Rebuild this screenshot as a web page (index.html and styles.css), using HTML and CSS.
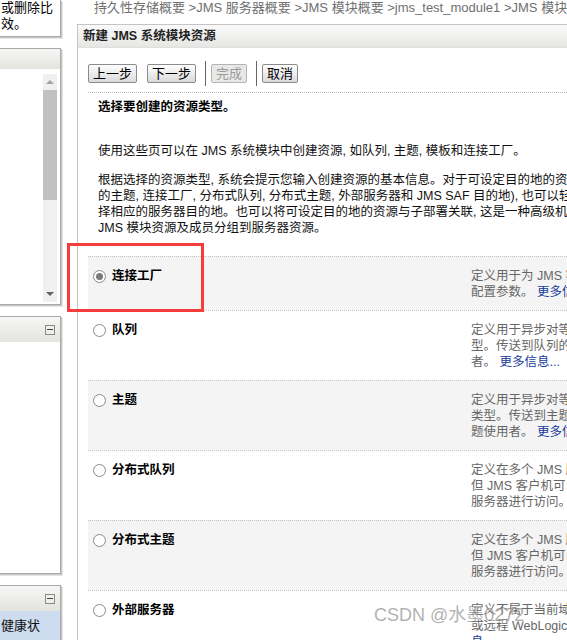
FILE: index.html
```html
<!DOCTYPE html>
<html lang="zh-CN">
<head>
    <meta charset="UTF-8">
    <meta name="viewport" content="width=device-width, initial-scale=1.0">
    <title>新建 JMS 系统模块资源</title>
    <link rel="stylesheet" href="styles.css">
</head>
<body>
    <div class="sidebar">
        <div class="side-panel panel-tip">
            <div class="tip-text">或删除比<br>效。</div>
        </div>

        <div class="side-panel panel-tree">
            <div class="side-head"></div>
            <div class="side-body">
                <div class="scrollbar">
                    <div class="arrow-up"></div>
                    <div class="thumb"></div>
                    <div class="track"></div>
                    <div class="arrow-down"></div>
                </div>
            </div>
        </div>

        <div class="side-panel panel-tasks">
            <div class="side-head"><span class="collapse"></span></div>
            <div class="side-body"></div>
        </div>

        <div class="side-panel panel-health">
            <div class="side-head"><span class="collapse"></span></div>
            <div class="health-row">健康状</div>
        </div>
    </div>

    <div class="content">
        <div class="breadcrumb">持久性存储概要 &gt;JMS 服务器概要 &gt;JMS 模块概要 &gt;jms_test_module1 &gt;JMS 模块概要</div>

        <div class="panel">
            <div class="panel-head">新建 JMS 系统模块资源</div>

            <div class="panel-body">
                <div class="toolbar">
                    <button class="btn">上一步</button>
                    <button class="btn">下一步</button>
                    <span class="sep"></span>
                    <button class="btn" disabled>完成</button>
                    <span class="sep"></span>
                    <button class="btn">取消</button>
                </div>

                <div class="intro">
                    <div class="intro-title">选择要创建的资源类型。</div>
                    <p class="intro-text">使用这些页可以在 JMS 系统模块中创建资源, 如队列, 主题, 模板和连接工厂。</p>
                    <p class="intro-text">根据选择的资源类型, 系统会提示您输入创建资源的基本信息。对于可设定目的地的资源 (如队列和主题<br>的主题, 连接工厂, 分布式队列, 分布式主题, 外部服务器和 JMS SAF 目的地), 也可以轻松地选<br>择相应的服务器目的地。也可以将可设定目的地的资源与子部署关联, 这是一种高级机制, 可以将<br>JMS 模块资源及成员分组到服务器资源。</p>
                </div>

                <div class="types">
                    <div class="type-row">
                        <label class="type-name"><span class="radio checked"></span>连接工厂</label>
                        <div class="type-desc">定义用于为 JMS 客户端创建连接的连接工厂的<br>配置参数。 <a href="#">更多信息...</a></div>
                    </div>
                    <div class="type-row">
                        <label class="type-name"><span class="radio"></span>队列</label>
                        <div class="type-desc">定义用于异步对等通信的 JMS 队列目的地类<br>型。传送到队列的消息只传递给一个队列使用<br>者。 <a href="#">更多信息...</a></div>
                    </div>
                    <div class="type-row">
                        <label class="type-name"><span class="radio"></span>主题</label>
                        <div class="type-desc">定义用于异步对等通信的 JMS 主题目的地的<br>类型。传送到主题的消息会传递给所有主<br>题使用者。 <a href="#">更多信息...</a></div>
                    </div>
                    <div class="type-row">
                        <label class="type-name"><span class="radio"></span>分布式队列</label>
                        <div class="type-desc">定义在多个 JMS 服务器上分布的一组队列,<br>但 JMS 客户机可以将其作为一个队列从单个<br>服务器进行访问。</div>
                    </div>
                    <div class="type-row">
                        <label class="type-name"><span class="radio"></span>分布式主题</label>
                        <div class="type-desc">定义在多个 JMS 服务器上分布的一组主题,<br>但 JMS 客户机可以将其作为一个主题从单个<br>服务器进行访问。</div>
                    </div>
                    <div class="type-row">
                        <label class="type-name"><span class="radio"></span>外部服务器</label>
                        <div class="type-desc">定义不属于当前域的外部 JMS 提供者<br>或远程 WebLogic 域中的目的地。<br><a href="#">息...</a></div>
                    </div>
                </div>
            </div>
        </div>
    </div>

    <div class="highlight"></div>
    <div class="watermark">CSDN @水墨0272</div>
</body>
</html>
```

FILE: styles.css
```css
* {
    margin: 0;
    padding: 0;
    box-sizing: border-box;
}

body {
    font-family: 'Liberation Sans', 'Noto Sans CJK SC', sans-serif;
    font-size: 12.5px;
    color: #000;
    background: #fff;
    display: flex;
    height: 640px;
    overflow: hidden;
    position: relative;
}

/* left column panels */
.sidebar {
    width: 62px;
    flex-shrink: 0;
}

.side-panel {
    margin-left: -10px;
    width: 71px;
    background: #fff;
    border: 1px solid #a9a9a9;
    box-shadow: 1px 1px 0 #c8c8c8, 2px 2px 0 #e4e4e4;
}

.panel-tip {
    border-top: none;
    height: 37px;
}

.tip-text {
    padding-left: 10px;
    line-height: 16px;
    font-size: 13px;
}

.panel-tree {
    margin-top: 11px;
    height: 257px;
}

.side-head {
    height: 20px;
    background: linear-gradient(#f6f6f4, #e3e3e0);
    display: flex;
    justify-content: flex-end;
    align-items: center;
    padding-right: 5px;
}

.panel-tasks .side-head,
.panel-health .side-head {
    height: 25px;
}

.collapse {
    width: 10px;
    height: 10px;
    border: 1px solid #8a8a85;
    background: #efefec;
    display: flex;
    align-items: center;
    justify-content: center;
}

.collapse::after {
    content: '';
    width: 6px;
    height: 1px;
    background: #444;
}

.panel-tree .side-body {
    display: flex;
    justify-content: flex-end;
    padding: 5px 3px 2px 0;
    height: 235px;
}

.scrollbar {
    width: 14px;
    background: #f0f0f0;
    display: flex;
    flex-direction: column;
    align-items: center;
}

.arrow-up,
.arrow-down {
    width: 0;
    height: 0;
    border-left: 4px solid transparent;
    border-right: 4px solid transparent;
    margin: 6px 0;
}

.arrow-up {
    border-bottom: 4px solid #a3a3a3;
}

.arrow-down {
    border-top: 4px solid #606060;
}

.thumb {
    width: 14px;
    height: 110px;
    background: #c1c1c1;
}

.track {
    flex: 1;
}

.panel-tasks {
    margin-top: 11px;
    height: 258px;
}

.panel-health {
    margin-top: 11px;
    height: 80px;
}

.health-row {
    background: #cddcee;
    height: 40px;
    padding: 7px 0 0 10px;
    line-height: 16px;
    font-size: 13px;
    color: #111;
}

/* main area */
.content {
    margin-left: 15px;
    width: 640px;
    flex-shrink: 0;
}

.breadcrumb {
    height: 24px;
    line-height: 16px;
    padding-left: 17px;
    font-size: 13px;
    color: #707070;
    white-space: nowrap;
}

.panel {
    border-left: 1px solid #c4c4c4;
    border-top: 1px solid #c4c4c4;
    height: 620px;
}

.panel-head {
    height: 23px;
    line-height: 22px;
    padding-left: 5px;
    font-weight: bold;
    color: #222;
    background: linear-gradient(#fafafa, #e6e6e4);
    border-bottom: 1px solid #e0e0e0;
}

.panel-body {
    padding: 13px 0 0 10px;
}

.toolbar {
    display: flex;
    align-items: center;
    height: 25px;
}

.btn {
    font: inherit;
    font-size: 13px;
    height: 19px;
    line-height: 16px;
    padding: 0 4px;
    border: 1px solid #8c8c8c;
    border-radius: 2px;
    background: linear-gradient(#fefefe, #dadada);
    color: #000;
    margin-right: 10px;
}

.btn:disabled {
    color: #9a9a9a;
    border-color: #b4b4b4;
    background: #e8e8e6;
}

.sep {
    width: 1px;
    height: 25px;
    background: #666;
    margin-right: 5px;
    margin-left: -1px;
}

.intro {
    margin-top: 6px;
    border-top: 1px dotted #bbb;
    padding: 6px 10px 20px;
    line-height: 16px;
    white-space: nowrap;
}

.intro-title {
    font-weight: bold;
}

.intro-text {
    margin-top: 28px;
    color: #111;
}

.intro-text + .intro-text {
    margin-top: 13px;
}

/* resource type list */
.type-row {
    display: flex;
    border-top: 1px dotted #c6c6c6;
    line-height: 16px;
}

.type-row:nth-child(odd) {
    background: #f4f4f4;
}

.type-name {
    width: 379px;
    flex-shrink: 0;
    display: flex;
    align-items: flex-start;
    padding: 11px 0 10px 5px;
    font-weight: bold;
}

.type-desc {
    padding: 11px 0 10px 4px;
    color: #666;
    white-space: nowrap;
}

.type-desc a {
    color: #16399c;
    text-decoration: none;
    margin-left: 14px;
}

.type-desc br + a {
    margin-left: 0;
}

.radio {
    width: 13px;
    height: 13px;
    margin: 2px 6px 0 0;
    border: 1px solid #8c8c8c;
    border-radius: 50%;
    background: radial-gradient(circle, #fff 60%, #ececec);
    display: flex;
    align-items: center;
    justify-content: center;
}

.radio.checked::after {
    content: '';
    width: 7px;
    height: 7px;
    border-radius: 50%;
    background: #7a7a7a;
}

/* overlays */
.highlight {
    position: absolute;
    left: 67px;
    top: 243px;
    width: 137px;
    height: 69px;
    border: 3px solid #f63b3b;
}

.watermark {
    position: absolute;
    left: 374px;
    top: 600px;
    font-size: 18px;
    color: rgba(110, 110, 110, 0.55);
    text-shadow: 1px 1px 1px rgba(255, 255, 255, 0.6);
    white-space: nowrap;
}
```
